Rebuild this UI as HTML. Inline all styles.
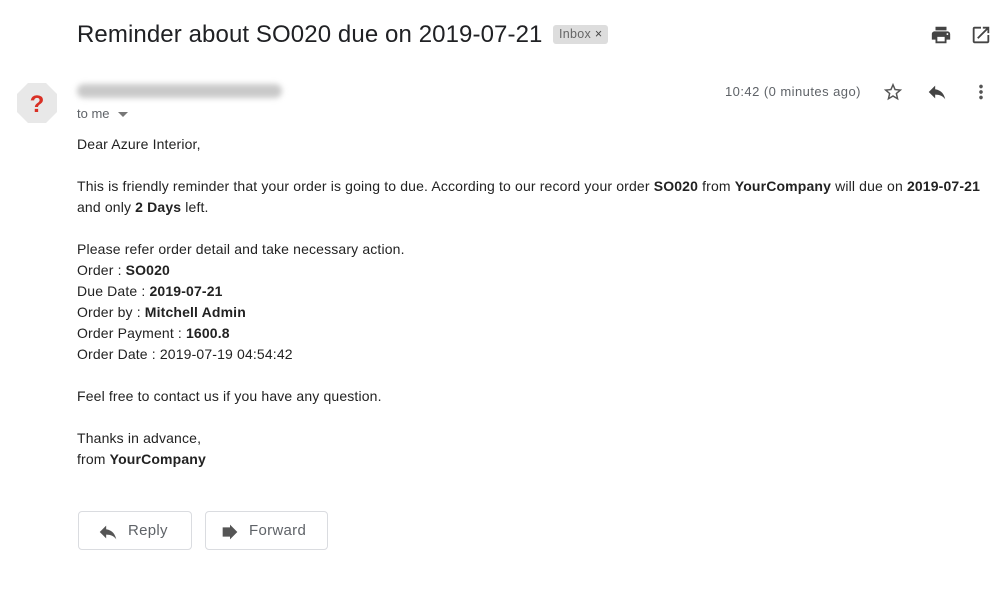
<!DOCTYPE html>
<html><head><meta charset="utf-8"><style>
body{margin:0;width:1007px;height:604px;background:#fff;font-family:"Liberation Sans",Arial,sans-serif;color:#222;position:relative;overflow:hidden}
.a{position:absolute;white-space:nowrap}
.body{position:absolute;left:77px;top:134px;font-size:14px;line-height:21px;color:#222;letter-spacing:0.15px}
.body p{margin:0 0 21px 0}
b{font-weight:bold}
.btn{position:absolute;top:511px;height:39px;border:1px solid #dadce0;border-radius:4px;box-sizing:border-box;font-size:15px;color:#5f6368}
.btn span{position:absolute;top:10px;line-height:17px;letter-spacing:0.3px}
</style></head><body>
<div class="a" style="left:77px;top:19px;font-size:24px;color:#202124;line-height:32px;letter-spacing:0.1px">Reminder about SO020 due on 2019-07-21</div>
<div class="a" style="left:553px;top:25px;height:19px;padding:0 6px;background:#ddd;border-radius:3px;font-size:12.5px;line-height:19px;color:#666;letter-spacing:0.3px">Inbox <span style="color:#444">×</span></div>
<svg class="a" style="left:930px;top:24px" width="22" height="22" viewBox="0 0 24 24"><path fill="#444" d="M19 8H5c-1.66 0-3 1.34-3 3v6h4v4h12v-4h4v-6c0-1.660-1.34-3-3-3zm-3 11H8v-5h8v5zm3-7c-.55 0-1-.45-1-1s.45-1 1-1 1 .45 1 1-.45 1-1 1zm-1-9H6v4h12V3z"/></svg>
<svg class="a" style="left:970px;top:24px" width="22" height="22" viewBox="0 0 24 24"><path fill="#444" d="M19 19H5V5h7V3H5c-1.11 0-2 .9-2 2v14c0 1.1.89 2 2 2h14c1.1 0 2-.9 2-2v-7h-2v7zM14 3v2h3.59l-9.83 9.830 1.41 1.41L19 6.41V10h2V3h-7z"/></svg>
<svg class="a" style="left:16px;top:82px" width="42" height="42" viewBox="0 0 42 42"><polygon points="12,1 30,1 41,12 41,30 30,41 12,41 1,30 1,12" fill="#e8e8e8"/><text x="21" y="30" text-anchor="middle" font-family="Liberation Sans" font-weight="bold" font-size="24" fill="#d93025">?</text></svg>
<div class="a" style="left:77px;top:84px;width:205px;height:14px;background:#c9c9c9;border-radius:7px;filter:blur(3px)"></div>
<div class="a" style="left:77px;top:106px;font-size:13px;color:#5f6368">to me</div>
<div class="a" style="left:118px;top:112px;width:0;height:0;border-left:5px solid transparent;border-right:5px solid transparent;border-top:5px solid #777"></div>
<div class="a" style="left:725px;top:84px;font-size:13px;color:#5f6368;letter-spacing:0.45px">10:42 (0 minutes ago)</div>
<svg class="a" style="left:882px;top:81px" width="22" height="22" viewBox="0 0 24 24"><path fill="#555" d="M22 9.24l-7.19-.62L12 2 9.19 8.63 2 9.24l5.46 4.73L5.82 21 12 17.27 18.18 21l-1.63-7.03L22 9.24zM12 15.4l-3.76 2.27 1-4.28-3.32-2.88 4.38-.38L12 6.1l1.71 4.040 4.38.38-3.32 2.88 1 4.28L12 15.4z"/></svg>
<svg class="a" style="left:926px;top:81px" width="22" height="22" viewBox="0 0 24 24"><path fill="#444" d="M10 9V5l-7 7 7 7v-4.1c5 0 8.5 1.6 11 5.1-1-5-4-10-11-11z"/></svg>
<svg class="a" style="left:970px;top:81px" width="22" height="22" viewBox="0 0 24 24"><path fill="#555" d="M12 8c1.1 0 2-.9 2-2s-.9-2-2-2-2 .9-2 2 .9 2 2 2zm0 2c-1.1 0-2 .9-2 2s.9 2 2 2 2-.9 2-2-.9-2-2-2zm0 6c-1.1 0-2 .9-2 2s.9 2 2 2 2-.9 2-2-.9-2-2-2z"/></svg>
<div class="body">
<p>Dear Azure Interior,</p>
<p>This is friendly reminder that your order is going to due. According to our record your order <b>SO020</b> from <b>YourCompany</b> will due on <b>2019-07-21</b><br>and only <b>2 Days</b> left.</p>
<p>Please refer order detail and take necessary action.<br>Order : <b>SO020</b><br>Due Date : <b>2019-07-21</b><br>Order by : <b>Mitchell Admin</b><br>Order Payment : <b>1600.8</b><br>Order Date : 2019-07-19 04:54:42</p>
<p>Feel free to contact us if you have any question.</p>
<p>Thanks in advance,<br>from <b>YourCompany</b></p>
</div>
<div class="btn" style="left:78px;width:114px"><svg style="position:absolute;left:18px;top:9px" width="22" height="22" viewBox="0 0 24 24"><path fill="#555" d="M10 9V5l-7 7 7 7v-4.1c5 0 8.5 1.6 11 5.1-1-5-4-10-11-11z"/></svg><span style="left:49px">Reply</span></div>
<div class="btn" style="left:205px;width:123px"><svg style="position:absolute;left:13px;top:9px" width="22" height="22" viewBox="0 0 24 24"><path fill="#555" d="M12 7V4l8 8-8 8v-3H4V7z"/></svg><span style="left:43px">Forward</span></div>
</body></html>
